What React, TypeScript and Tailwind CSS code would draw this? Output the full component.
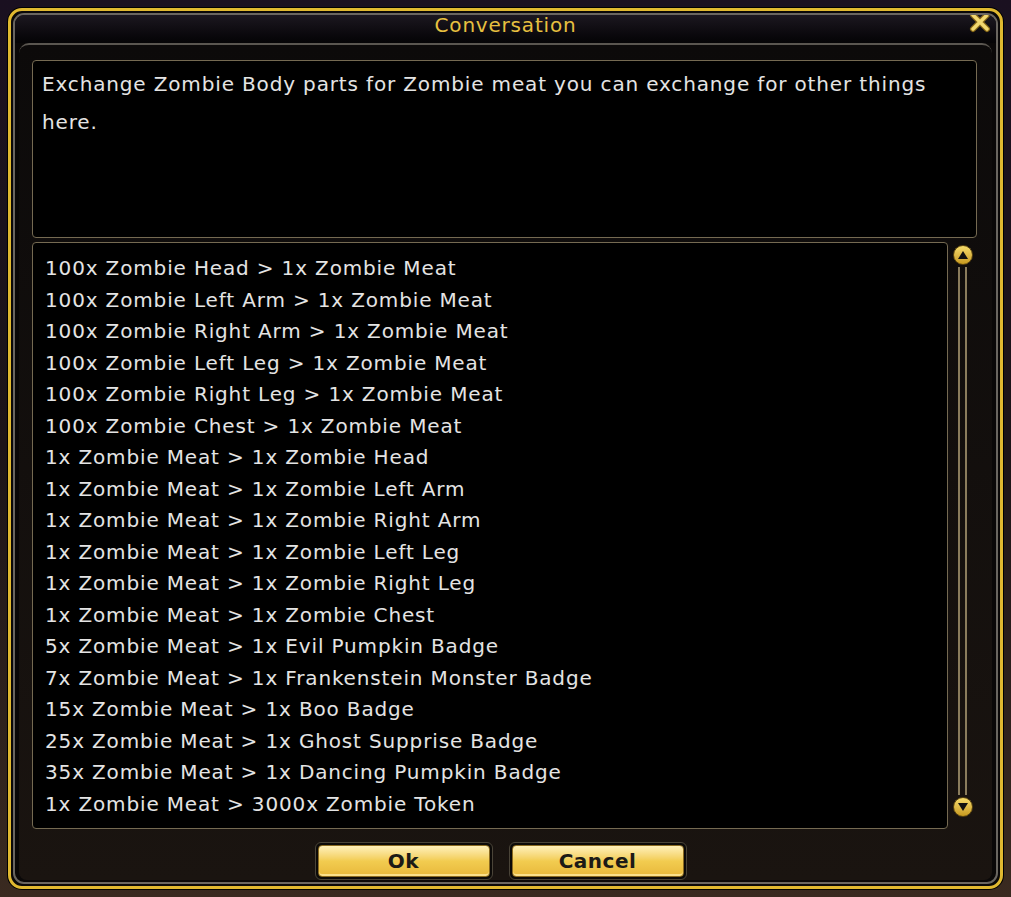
const TRADES = [
  '100x Zombie Head > 1x Zombie Meat',
  '100x Zombie Left Arm > 1x Zombie Meat',
  '100x Zombie Right Arm > 1x Zombie Meat',
  '100x Zombie Left Leg > 1x Zombie Meat',
  '100x Zombie Right Leg > 1x Zombie Meat',
  '100x Zombie Chest > 1x Zombie Meat',
  '1x Zombie Meat > 1x Zombie Head',
  '1x Zombie Meat > 1x Zombie Left Arm',
  '1x Zombie Meat > 1x Zombie Right Arm',
  '1x Zombie Meat > 1x Zombie Left Leg',
  '1x Zombie Meat > 1x Zombie Right Leg',
  '1x Zombie Meat > 1x Zombie Chest',
  '5x Zombie Meat > 1x Evil Pumpkin Badge',
  '7x Zombie Meat > 1x Frankenstein Monster Badge',
  '15x Zombie Meat > 1x Boo Badge',
  '25x Zombie Meat > 1x Ghost Supprise Badge',
  '35x Zombie Meat > 1x Dancing Pumpkin Badge',
  '1x Zombie Meat > 3000x Zombie Token',
];

function ScrollArrow({ down }: { down?: boolean }) {
  return (
    <div className="w-[20px] h-[20px] rounded-full bg-gradient-to-b from-[#f6dc6a] to-[#c89a1c] border border-[#5a4410] flex items-center justify-center">
      <svg width="12" height="10" viewBox="0 0 12 10" className={down ? 'rotate-180' : ''}>
        <polygon points="6,1 11,9 1,9" fill="#111" />
      </svg>
    </div>
  );
}

function GoldButton({ label }: { label: string }) {
  return (
    <div className="p-[2px] rounded-[6px] bg-[#0c0a08] border border-[#4a4438]">
      <button className="w-[172px] h-[32px] rounded-[4px] border border-[#8a6a20] bg-gradient-to-b from-[#fff0b8] via-[#f2cc50] to-[#e8b83a] text-[#1c1a16] font-bold text-[20px] leading-none tracking-[0.5px] shadow-[inset_0_-2px_0_#fbe08a]">
        {label}
      </button>
    </div>
  );
}

export default function App() {
  return (
    <div
      className="w-[1011px] h-[897px] bg-gradient-to-b from-[#1a1020] via-[#1c1418] to-[#3a2a20] p-[8px]"
      style={{ fontFamily: '"DejaVu Sans", Verdana, sans-serif' }}
    >
      <div className="w-full h-full rounded-[14px] border-[3px] border-[#e0b830] bg-[#0a0808] p-[2px] shadow-[0_0_0_1px_#000]">
        <div className="w-full h-full rounded-[11px] border-2 border-[#6a6660] flex flex-col overflow-hidden">
          {/* title bar */}
          <div className="relative h-[28px] shrink-0 bg-gradient-to-b from-[#1c1820] to-[#050406] flex items-start justify-center">
            <span className="text-[#e8c040] text-[20px] leading-[20px] tracking-[0.8px]">Conversation</span>
            <svg className="absolute right-[5px] top-[-4px]" width="22" height="22" viewBox="0 0 22 22">
              <path d="M4 4 L18 18 M18 4 L4 18" stroke="#8a6a18" strokeWidth="6" strokeLinecap="round" />
              <path d="M4 4 L18 18 M18 4 L4 18" stroke="#f2d870" strokeWidth="3.5" strokeLinecap="round" />
            </svg>
          </div>
          {/* body */}
          <div className="flex-1 mx-[4px] mb-[2px] rounded-t-[10px] rounded-b-[8px] border-t-2 border-[#5a5650] bg-gradient-to-b from-[#0c0a0a] to-[#1a1410] flex flex-col pl-[13px] pr-[15px] pt-[15px]">
            <div className="h-[178px] rounded-[4px] border border-[#756a52] bg-black pl-[9px] pr-[20px] pt-[4px] text-[#e4e4e4] text-[20px] leading-[38px] tracking-[0.85px]">
              Exchange Zombie Body parts for Zombie meat you can exchange for other things here.
            </div>
            <div className="flex mt-[4px] h-[587px]">
              <div className="flex-1 rounded-[4px] border border-[#756a52] bg-black pl-[12px] pt-[10px] text-[#e4e4e4] text-[20px] leading-[31.5px] tracking-[0.85px]">
                {TRADES.map((t) => (
                  <div key={t} className="whitespace-nowrap">{t}</div>
                ))}
              </div>
              <div className="w-[29px] flex flex-col items-center pt-[3px] pb-[12px]">
                <ScrollArrow />
                <div className="flex-1 w-[9px] border-x-2 border-[#8a7c5c] my-[2px]" />
                <ScrollArrow down />
              </div>
            </div>
            <div className="flex justify-center gap-[16px] mt-[13px] pr-[8px]">
              <GoldButton label="Ok" />
              <GoldButton label="Cancel" />
            </div>
          </div>
        </div>
      </div>
    </div>
  );
}
